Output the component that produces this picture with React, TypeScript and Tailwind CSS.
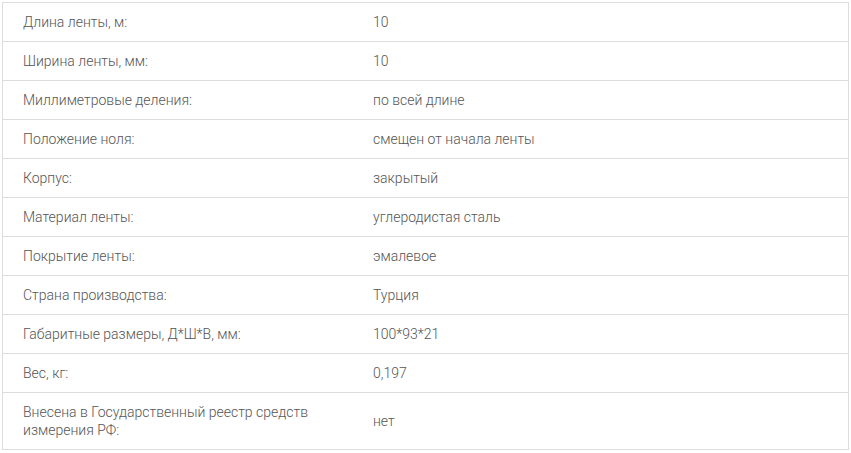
import React from "react";

const rows: [string, string][] = [
  ["Длина ленты, м:", "10"],
  ["Ширина ленты, мм:", "10"],
  ["Миллиметровые деления:", "по всей длине"],
  ["Положение ноля:", "смещен от начала ленты"],
  ["Корпус:", "закрытый"],
  ["Материал ленты:", "углеродистая сталь"],
  ["Покрытие ленты:", "эмалевое"],
  ["Страна производства:", "Турция"],
  ["Габаритные размеры, Д*Ш*В, мм:", "100*93*21"],
  ["Вес, кг:", "0,197"],
  ["Внесена в Государственный реестр средств измерения РФ:", "нет"],
];

export default function App() {
  return (
    <div className="bg-white w-[851px] h-[453px] pt-[2px] pl-[2px]" style={{ fontFamily: "Roboto, 'Liberation Sans', sans-serif" }}>
      <div className="w-[847px] border-l border-r border-t border-[#dddddd] text-[14px] leading-[18px] font-light text-[#555555]">
        {rows.map(([k, v], i) => (
          <div key={i} className="flex items-center border-b border-[#dddddd]">
            <div className="w-[350px] shrink-0 py-[10px] pl-[20px] pr-[20px]">{k}</div>
            <div className="flex-1 py-[10px] pl-[20px] pr-[20px]">{v}</div>
          </div>
        ))}
      </div>
    </div>
  );
}
